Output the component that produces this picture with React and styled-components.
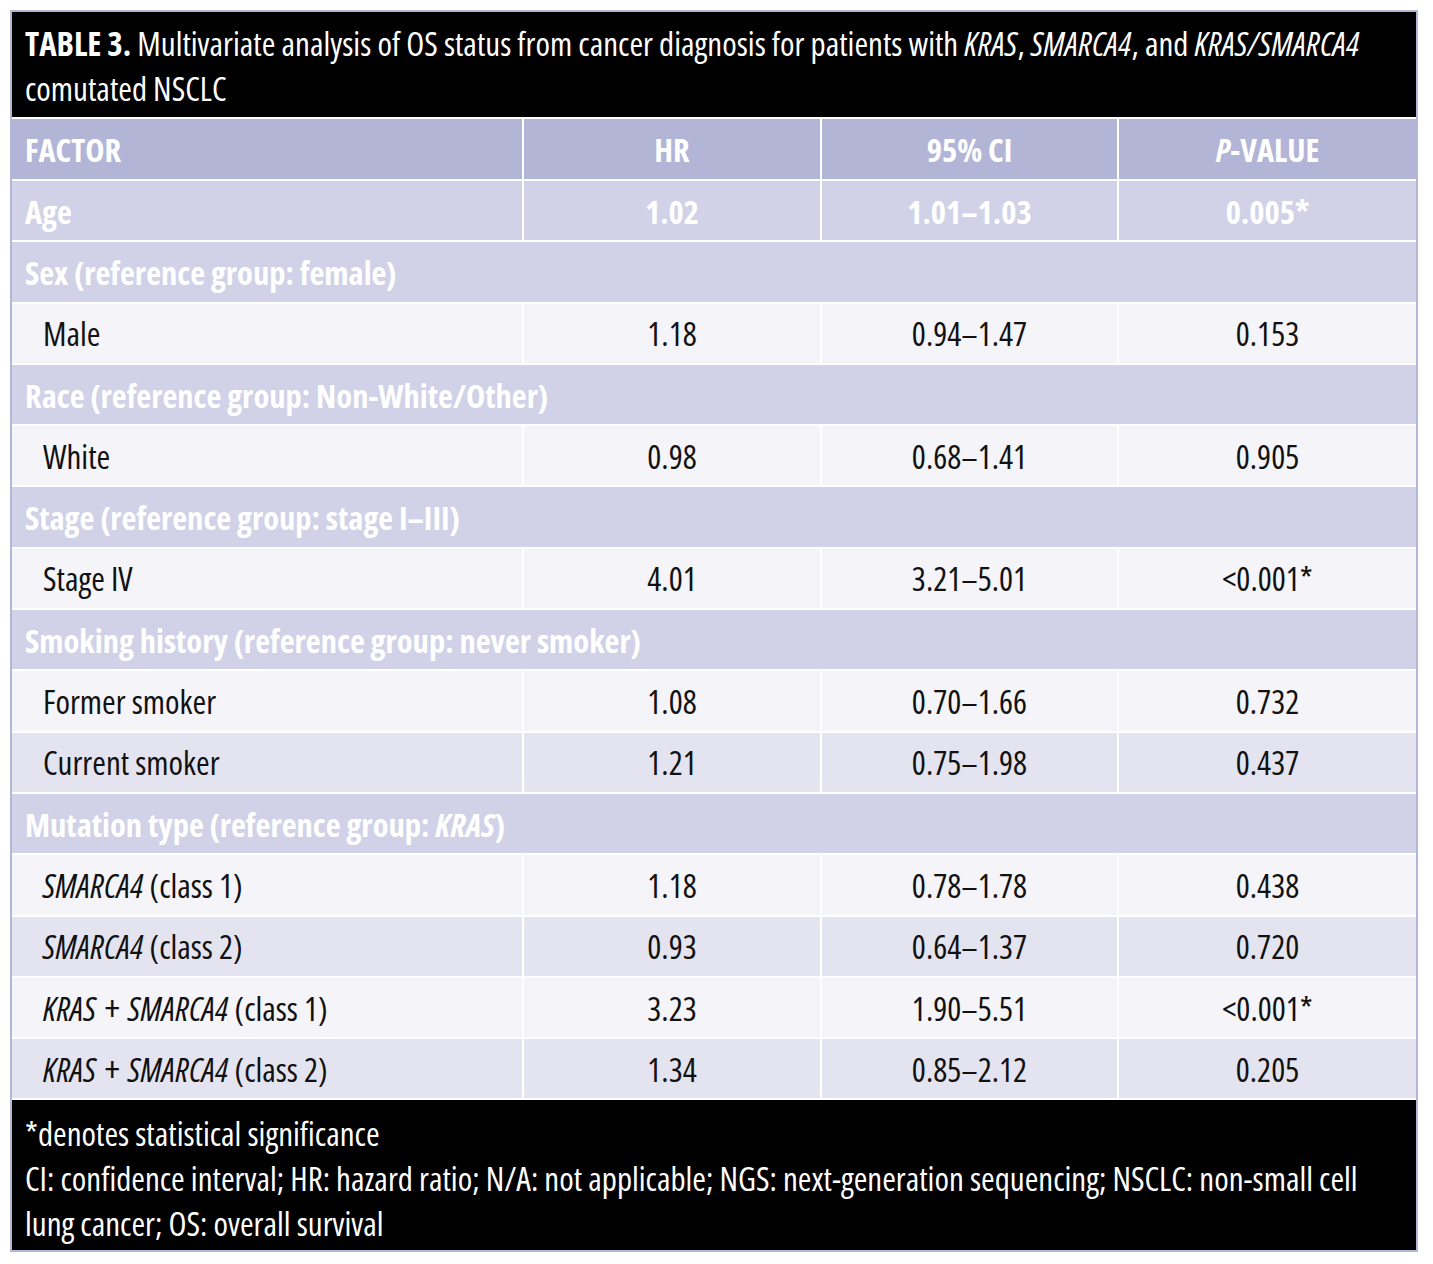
import React from "react";
import styled, { createGlobalStyle } from "styled-components";

const Global = createGlobalStyle`
  html, body { margin: 0; padding: 0; background: #ffffff; }
  body {
    font-family: "Open Sans", "Liberation Sans", sans-serif;
    font-stretch: 75%;
    -webkit-font-smoothing: antialiased;
  }
`;

const Frame = styled.div`
  margin: 10px;
  width: 1404px;
  border: 2px solid #b4b6d8;
  background: #ffffff;
  display: flex;
  flex-direction: column;
  gap: 2px;
`;

const Caption = styled.div`
  background: #000000;
  color: #ffffff;
  font-size: 33px;
  line-height: 45px;
  padding: 9px 20px 6px 13px;
  height: 105px;
  box-sizing: border-box;
  white-space: nowrap;
`;

const Strong = styled.b`
  font-weight: 700;
`;

const Table = styled.div`
  display: flex;
  flex-direction: column;
  gap: 2px;
  background: #ffffff;
`;

const palette = {
  head: "#b3b5d7",
  section: "#d1d2e7",
  light: "#f4f4f9",
  alt: "#e4e4f0",
};

const Row = styled.div`
  display: grid;
  grid-template-columns: 510px 296px 295px 1fr;
  column-gap: 2px;
  height: ${(p) => (p.$head ? "60px" : "59.3px")};
`;

const Cell = styled.div`
  background: ${(p) => palette[p.$tone]};
  display: flex;
  align-items: center;
  justify-content: ${(p) => (p.$center ? "center" : "flex-start")};
  padding-left: ${(p) => (p.$center ? "0" : p.$indent ? "31px" : "13px")};
  padding-top: 1px;
  font-size: ${(p) => (p.$bold ? "32.5px" : "33px")};
  font-weight: ${(p) => (p.$bold ? 700 : 400)};
  color: ${(p) => (p.$bold ? "#ffffff" : "#111111")};
  white-space: pre;
`;

const Label = styled.span`
  display: inline-block;
`;

const SectionCell = styled(Cell)`
  grid-column: 1 / -1;
`;

const Footnote = styled.div`
  background: #000000;
  color: #ffffff;
  font-size: 33px;
  line-height: 45px;
  padding: 11px 20px 4px 13px;
  height: 150px;
  box-sizing: border-box;
  white-space: nowrap;
`;

const I = styled.i`
  font-style: italic;
  letter-spacing: 0.3px;
`;

const Plus = styled.span`
  margin: 0 2px;
  font-size: 1.1em;
  line-height: 1;
`;

const data = [
  { type: "bold", label: "Age", hr: "1.02", ci: "1.01–1.03", p: "0.005*" },
  { type: "section", label: "Sex (reference group: female)" },
  { type: "data", tone: "light", label: "Male", hr: "1.18", ci: "0.94–1.47", p: "0.153" },
  { type: "section", label: "Race (reference group: Non-White/Other)" },
  { type: "data", tone: "light", label: "White", hr: "0.98", ci: "0.68–1.41", p: "0.905" },
  { type: "section", label: "Stage (reference group: stage I–III)" },
  { type: "data", tone: "light", label: "Stage IV", hr: "4.01", ci: "3.21–5.01", p: "<0.001*" },
  { type: "section", label: "Smoking history (reference group: never smoker)" },
  { type: "data", tone: "light", label: "Former smoker", hr: "1.08", ci: "0.70–1.66", p: "0.732" },
  { type: "data", tone: "alt", label: "Current smoker", hr: "1.21", ci: "0.75–1.98", p: "0.437" },
  {
    type: "section",
    label: (
      <>
        {"Mutation type (reference group: "}
        <I>KRAS</I>
        {")"}
      </>
    ),
  },
  {
    type: "data",
    tone: "light",
    label: (
      <>
        <I>SMARCA4</I>
        {" (class 1)"}
      </>
    ),
    hr: "1.18",
    ci: "0.78–1.78",
    p: "0.438",
  },
  {
    type: "data",
    tone: "alt",
    label: (
      <>
        <I>SMARCA4</I>
        {" (class 2)"}
      </>
    ),
    hr: "0.93",
    ci: "0.64–1.37",
    p: "0.720",
  },
  {
    type: "data",
    tone: "light",
    label: (
      <>
        <I>KRAS</I>
        {" "}
        <Plus>+</Plus>
        {" "}
        <I>SMARCA4</I>
        {" (class 1)"}
      </>
    ),
    hr: "3.23",
    ci: "1.90–5.51",
    p: "<0.001*",
  },
  {
    type: "data",
    tone: "alt",
    label: (
      <>
        <I>KRAS</I>
        {" "}
        <Plus>+</Plus>
        {" "}
        <I>SMARCA4</I>
        {" (class 2)"}
      </>
    ),
    hr: "1.34",
    ci: "0.85–2.12",
    p: "0.205",
  },
];

export default function App() {
  return (
    <>
      <Global />
      <Frame>
        <Caption>
          <Strong>TABLE 3.</Strong> Multivariate analysis of OS status from cancer diagnosis for
          patients with <I>KRAS</I>, <I>SMARCA4</I>, and <I>KRAS/SMARCA4</I>
          <br />
          comutated NSCLC
        </Caption>
        <Table>
          <Row $head>
            <Cell $tone="head" $bold>FACTOR</Cell>
            <Cell $tone="head" $bold $center>HR</Cell>
            <Cell $tone="head" $bold $center>95% CI</Cell>
            <Cell $tone="head" $bold $center>
              <Label>
                <I>P</I>-VALUE
              </Label>
            </Cell>
          </Row>
          {data.map((r, i) => {
            if (r.type === "section") {
              return (
                <Row key={i}>
                  <SectionCell $tone="section" $bold>
                    <Label>{r.label}</Label>
                  </SectionCell>
                </Row>
              );
            }
            const bold = r.type === "bold";
            const tone = bold ? "section" : r.tone;
            return (
              <Row key={i}>
                <Cell $tone={tone} $bold={bold} $indent={!bold}>
                  <Label>{r.label}</Label>
                </Cell>
                <Cell $tone={tone} $bold={bold} $center>{r.hr}</Cell>
                <Cell $tone={tone} $bold={bold} $center>{r.ci}</Cell>
                <Cell $tone={tone} $bold={bold} $center>{r.p}</Cell>
              </Row>
            );
          })}
        </Table>
        <Footnote>
          *denotes statistical significance
          <br />
          CI: confidence interval; HR: hazard ratio; N/A: not applicable; NGS: next-generation
          sequencing; NSCLC: non-small cell
          <br />
          lung cancer; OS: overall survival
        </Footnote>
      </Frame>
    </>
  );
}
